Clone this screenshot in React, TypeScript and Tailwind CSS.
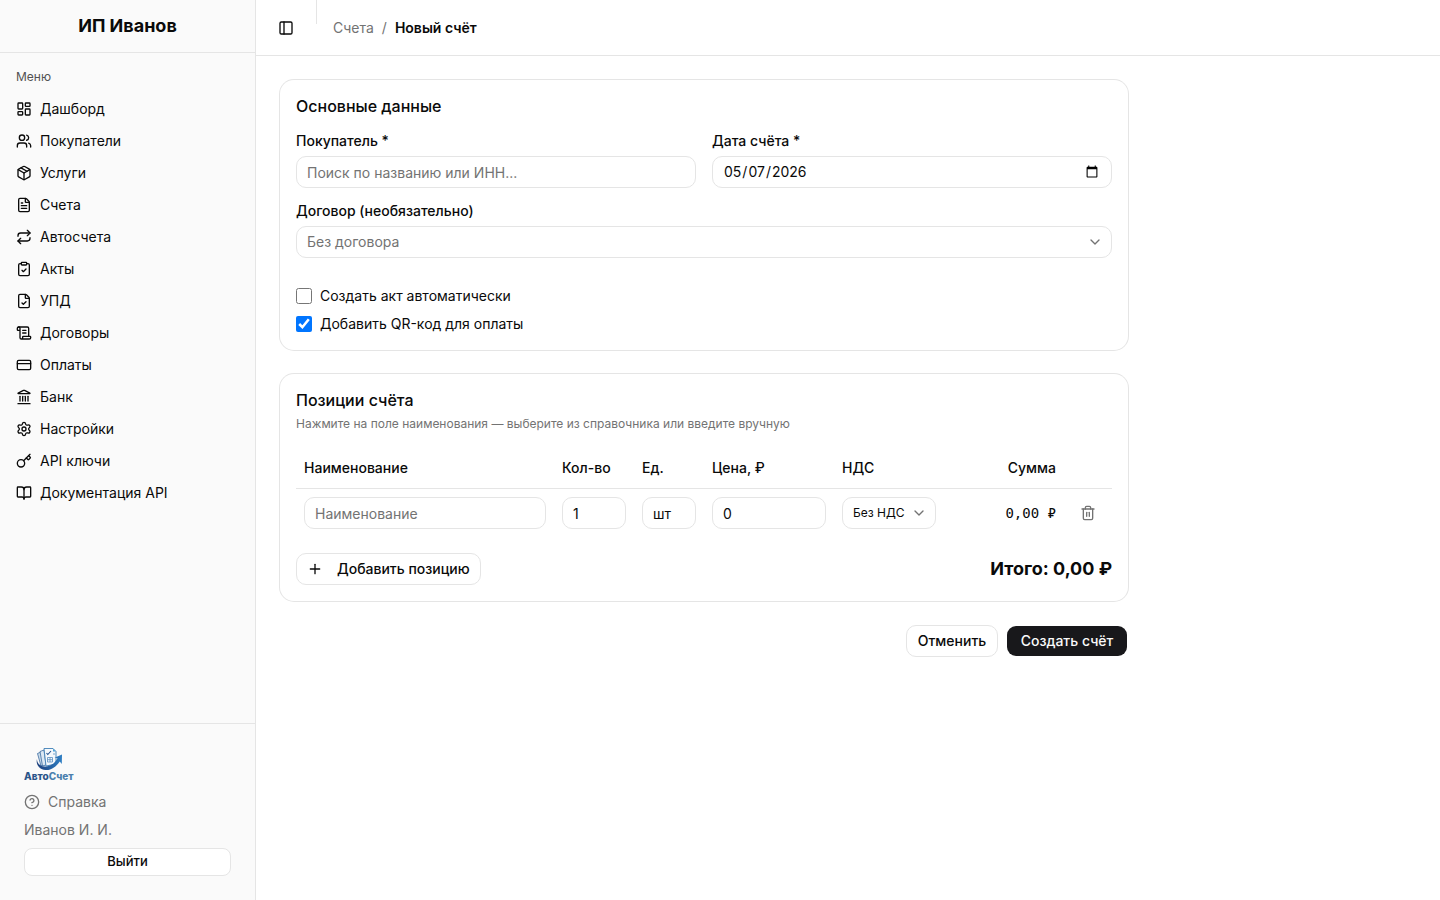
import React, { useState } from 'react';
import {
  LayoutDashboard,
  Users,
  Package,
  FileText,
  Repeat,
  ClipboardCheck,
  FileCheck,
  ScrollText,
  CreditCard,
  Landmark,
  Settings,
  Key,
  BookOpen,
  CircleHelp,
  PanelLeft,
  ChevronDown,
  Plus,
  Trash2,
} from 'lucide-react';

const menuItems = [
  { title: 'Дашборд', href: '#dashboard', icon: LayoutDashboard },
  { title: 'Покупатели', href: '#customers', icon: Users },
  { title: 'Услуги', href: '#services', icon: Package },
  { title: 'Счета', href: '#invoices', icon: FileText },
  { title: 'Автосчета', href: '#recurring', icon: Repeat },
  { title: 'Акты', href: '#acts', icon: ClipboardCheck },
  { title: 'УПД', href: '#upd', icon: FileCheck },
  { title: 'Договоры', href: '#contracts', icon: ScrollText },
  { title: 'Оплаты', href: '#payments', icon: CreditCard },
  { title: 'Банк', href: '#bank', icon: Landmark },
  { title: 'Настройки', href: '#settings', icon: Settings },
  { title: 'API ключи', href: '#api-keys', icon: Key },
  { title: 'Документация API', href: '#docs', icon: BookOpen },
];

const inputClass =
  'h-8 w-full min-w-0 rounded-[10px] border border-neutral-200 bg-white px-2.5 text-sm outline-none placeholder:text-neutral-500';

const formatMoney = (value: number) => `${value.toFixed(2).replace('.', ',')} ₽`;

const Logo: React.FC = () => (
  <svg className="h-9 w-[50px]" viewBox="0 0 50 36" role="img" aria-label="АвтоСчет">
    <defs>
      <linearGradient id="swoosh" x1="0" y1="0" x2="1" y2="0">
        <stop offset="0" stopColor="#1d3f7c" />
        <stop offset="1" stopColor="#2f7fc4" />
      </linearGradient>
    </defs>
    <path d="M13.5 5.5 17 4l3 13-3 1z" fill="#c9dbea" stroke="#3c6b9f" strokeWidth="0.8" />
    <path d="M16 3.5 20 2l2 15-3.5 1z" fill="#dbe8f3" stroke="#3c6b9f" strokeWidth="0.8" />
    <path d="M20 .5h9l3 3V16l-10 2z" fill="#f5f9fc" stroke="#3f7fb5" strokeWidth="0.9" />
    <path d="M29 .5v3h3z" fill="#4fa3d8" />
    <path d="m22.5 5 1.3 1.5L27 3" fill="none" stroke="#24538f" strokeWidth="1.1" />
    <path d="M23.5 9.500h5v4.500h-5zM26 9.500V14M23.500 11.700h5M29 6h2" fill="none" stroke="#5b8fc0" strokeWidth="0.8" />
    <path
      d="M13 11c0 5 4 8 9 7.500 5.500-.5 9.500-4 11.500-8.500l-3-.2L38 6.500l-.2 9.500-2-2.500C32 19 27 22.500 21.500 22 15.500 21.500 11.500 16.500 13 11z"
      fill="url(#swoosh)"
    />
    <text x="0" y="32" fontSize="10" fontWeight="800" fill="#2a5489" fontFamily="Inter, sans-serif">
      Авто<tspan fill="#4a7fae">Счет</tspan>
    </text>
  </svg>
);

const Sidebar: React.FC = () => (
  <aside className="flex w-64 shrink-0 flex-col border-r border-neutral-200 bg-neutral-50">
    <div className="border-b border-neutral-200 px-4 py-3 text-center text-lg font-bold">ИП Иванов</div>

    <nav className="flex-1 p-2" aria-label="Меню">
      <div className="flex h-8 items-center px-2 text-xs text-neutral-600">Меню</div>
      <ul>
        {menuItems.map((item) => (
          <li key={item.title}>
            <a href={item.href} className="flex h-8 items-center gap-2 rounded-lg px-2 text-sm hover:bg-neutral-100">
              <item.icon className="size-4 shrink-0" />
              <span>{item.title}</span>
            </a>
          </li>
        ))}
      </ul>
    </nav>

    <div className="flex flex-col gap-2 border-t border-neutral-200 p-6">
      <Logo />
      <a href="#help" className="flex items-center gap-2 text-sm text-neutral-500 hover:text-neutral-900">
        <CircleHelp className="size-4" />
        Справка
      </a>
      <div className="text-sm text-neutral-500">Иванов И. И.</div>
      <button
        type="button"
        className="h-7 rounded-lg border border-neutral-200 bg-white text-[13px] font-medium hover:bg-neutral-100"
      >
        Выйти
      </button>
    </div>
  </aside>
);

export default function App() {
  const [date, setDate] = useState('2026-05-07');
  const [createAct, setCreateAct] = useState(false);
  const [addQr, setAddQr] = useState(true);
  const [quantity, setQuantity] = useState('1');
  const [unit, setUnit] = useState('шт');
  const [price, setPrice] = useState('0');

  const total = (Number(quantity) || 0) * (Number(price) || 0);

  return (
    <div className="flex min-h-screen bg-white font-[Inter,sans-serif] text-neutral-950">
      <Sidebar />

      <div className="flex min-w-0 flex-1 flex-col">
        <header className="flex h-14 items-center gap-4 border-b border-neutral-200 px-4">
          <button
            type="button"
            aria-label="Свернуть меню"
            className="flex size-7 items-center justify-center rounded-lg hover:bg-neutral-100"
          >
            <PanelLeft className="size-4" />
          </button>
          <div className="h-6 w-px self-start bg-neutral-200" />
          <nav className="flex items-center gap-2 text-sm" aria-label="Навигация">
            <a href="#invoices" className="text-neutral-500 hover:text-neutral-900">Счета</a>
            <span className="text-neutral-500">/</span>
            <span className="font-semibold">Новый счёт</span>
          </nav>
        </header>

        <main className="p-6">
          <form className="flex max-w-[848px] flex-col gap-6" onSubmit={(e) => e.preventDefault()}>
            <section className="rounded-[14px] p-4 ring-1 ring-neutral-200">
              <h2 className="text-base leading-5 font-medium">Основные данные</h2>

              <div className="mt-[18px] grid grid-cols-2 gap-4">
                <div className="flex flex-col gap-2">
                  <label htmlFor="customer" className="text-sm leading-none font-medium">Покупатель *</label>
                  <input id="customer" type="text" className={inputClass} placeholder="Поиск по названию или ИНН..." />
                </div>
                <div className="flex flex-col gap-2">
                  <label htmlFor="date" className="text-sm leading-none font-medium">Дата счёта *</label>
                  <input
                    id="date"
                    type="date"
                    className={inputClass}
                    value={date}
                    onChange={(e) => setDate(e.target.value)}
                  />
                </div>
                <div className="col-span-2 flex flex-col gap-2">
                  <label htmlFor="contract" className="text-sm leading-none font-medium">Договор (необязательно)</label>
                  <div className="relative">
                    <select id="contract" className={`${inputClass} appearance-none text-neutral-500`}>
                      <option>Без договора</option>
                    </select>
                    <ChevronDown className="pointer-events-none absolute top-2 right-[9px] size-4 text-neutral-500" />
                  </div>
                </div>
              </div>

              <div className="mt-7 flex flex-col gap-2 text-sm">
                <label className="flex items-center gap-2">
                  <input
                    type="checkbox"
                    className="size-4"
                    checked={createAct}
                    onChange={(e) => setCreateAct(e.target.checked)}
                  />
                  Создать акт автоматически
                </label>
                <label className="flex items-center gap-2">
                  <input
                    type="checkbox"
                    className="size-4"
                    checked={addQr}
                    onChange={(e) => setAddQr(e.target.checked)}
                  />
                  Добавить QR-код для оплаты
                </label>
              </div>
            </section>

            <section className="rounded-[14px] p-4 ring-1 ring-neutral-200">
              <h2 className="text-base leading-5 font-medium">Позиции счёта</h2>
              <p className="mt-1.5 text-xs text-neutral-500">
                Нажмите на поле наименования — выберите из справочника или введите вручную
              </p>

              <table className="mt-4 w-full table-fixed border-separate border-spacing-0 text-sm">
                <thead>
                  <tr className="h-[41px] text-left *:border-b *:border-neutral-200 *:px-2 *:font-medium">
                    <th>Наименование</th>
                    <th className="w-20">Кол-во</th>
                    <th className="w-[70px]">Ед.</th>
                    <th className="w-[130px]">Цена, ₽</th>
                    <th className="w-[110px]">НДС</th>
                    <th className="w-[120px] text-right">Сумма</th>
                    <th className="w-12" aria-label="Действия" />
                  </tr>
                </thead>
                <tbody>
                  <tr className="*:p-2">
                    <td>
                      <input type="text" aria-label="Наименование" className={inputClass} placeholder="Наименование" />
                    </td>
                    <td>
                      <input
                        type="text"
                        aria-label="Количество"
                        className={inputClass}
                        value={quantity}
                        onChange={(e) => setQuantity(e.target.value)}
                      />
                    </td>
                    <td>
                      <input
                        type="text"
                        aria-label="Единица"
                        className={inputClass}
                        value={unit}
                        onChange={(e) => setUnit(e.target.value)}
                      />
                    </td>
                    <td>
                      <input
                        type="text"
                        aria-label="Цена"
                        className={inputClass}
                        value={price}
                        onChange={(e) => setPrice(e.target.value)}
                      />
                    </td>
                    <td>
                      <div className="relative">
                        <select
                          aria-label="НДС"
                          className="h-8 w-full appearance-none rounded-[10px] border border-neutral-200 bg-white pl-2.5 text-xs outline-none"
                        >
                          <option>Без НДС</option>
                        </select>
                        <ChevronDown className="pointer-events-none absolute top-2 right-[9px] size-4 text-neutral-500" />
                      </div>
                    </td>
                    <td className="text-right font-['DejaVu_Sans_Mono',monospace]">{formatMoney(total)}</td>
                    <td>
                      <button
                        type="button"
                        aria-label="Удалить позицию"
                        className="flex size-8 items-center justify-center rounded-lg text-neutral-500 hover:bg-neutral-100"
                      >
                        <Trash2 className="size-4" />
                      </button>
                    </td>
                  </tr>
                </tbody>
              </table>

              <div className="mt-4 flex items-center justify-between">
                <button
                  type="button"
                  className="flex h-8 items-center gap-3.5 rounded-[10px] border border-neutral-200 px-2.5 text-sm font-medium hover:bg-neutral-100"
                >
                  <Plus className="size-4" />
                  Добавить позицию
                </button>
                <div className="text-lg font-bold">Итого: {formatMoney(total)}</div>
              </div>
            </section>

            <div className="flex justify-end gap-2">
              <button
                type="button"
                className="h-8 min-w-[92px] rounded-[10px] border border-neutral-200 px-2.5 text-sm font-medium hover:bg-neutral-100"
              >
                Отменить
              </button>
              <button
                type="submit"
                className="h-8 min-w-[122px] rounded-[10px] border border-transparent bg-zinc-900 bg-clip-padding px-2.5 text-sm font-medium text-neutral-50 hover:bg-zinc-800"
              >
                Создать счёт
              </button>
            </div>
          </form>
        </main>
      </div>
    </div>
  );
}
